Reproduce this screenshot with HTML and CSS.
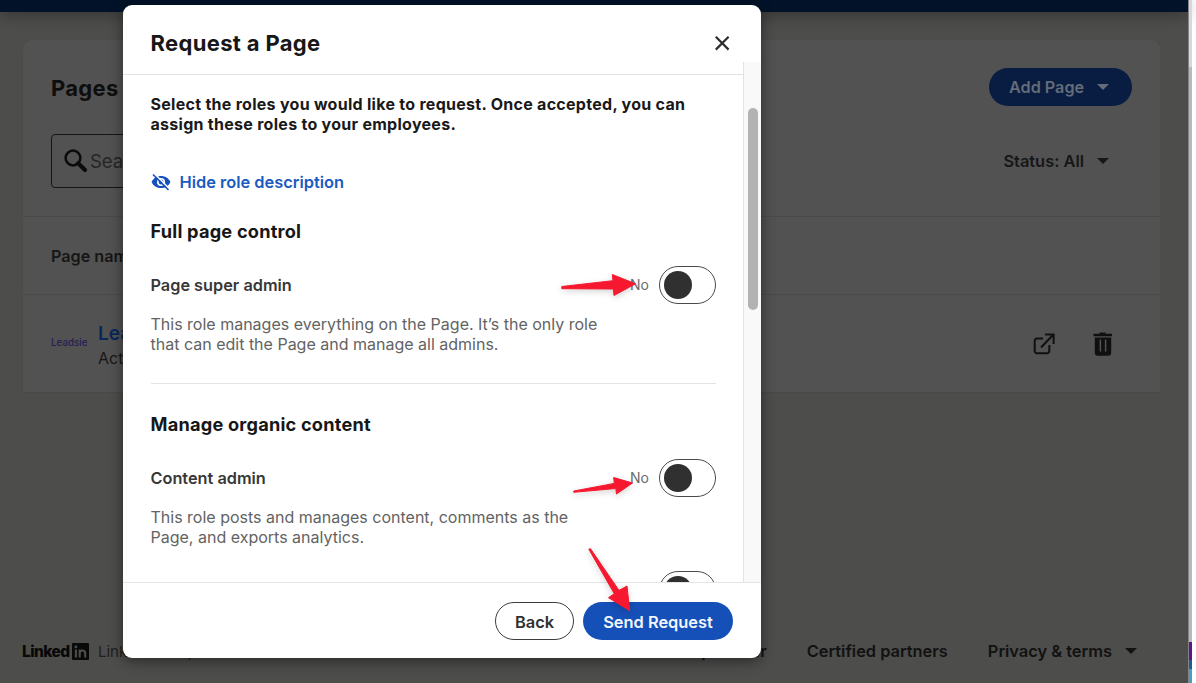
FILE: index.html
```html
<!DOCTYPE html>
<html lang="en">
<head>
<meta charset="utf-8">
<title>Request a Page</title>
<link rel="stylesheet" href="styles.css">
</head>
<body>
<div class="screen">
  <div class="app">
    <header class="topbar"></header>
    <main class="panel">
      <div class="panel-head">
        <h1 class="panel-title">Pages</h1>
        <button class="add">Add Page <i class="caret"></i></button>
      </div>
      <div class="filters">
        <div class="search">
          <svg width="24" height="24" viewBox="0 0 24 24" fill="none" stroke="#0b0b0b"><circle cx="9" cy="9" r="7.4" stroke-width="2.5"/><path d="M14.2 14.2 21 21" stroke-width="4.2" stroke-linecap="round"/></svg>
          <span>Search</span>
        </div>
        <div class="status">Status: All <i class="caret"></i></div>
      </div>
      <div class="thead">Page name</div>
      <div class="trow">
        <span class="brand">Leadsie</span>
        <div class="page"><b>Leadsie</b><span>Active</span></div>
        <div class="actions">
          <svg width="24" height="24" viewBox="0 0 24 24" fill="none" stroke="#101010" stroke-width="2"><path d="M11 6.500H5a2.300 2.300 0 0 0-2.300 2.300V19a2.300 2.300 0 0 0 2.300 2.300h10a2.300 2.300 0 0 0 2.300-2.300v-6M13 2.500h8.600v9.500M21 3 9 15.500"/></svg>
          <svg width="24" height="24" viewBox="0 0 24 24"><path fill="#101010" d="M8.500 .5h6v1.200H21V4.200H2.500V1.700h6zM3.800 5.500h16.400v15.300a3 3 0 0 1-3 3H6.800a3 3 0 0 1-3-3z"/><path d="M9.400 7.500v12M14.600 7.500v12" stroke="#525252" stroke-width="1.500"/></svg>
        </div>
      </div>
    </main>
    <footer class="foot">
      <span class="wordmark">Linked</span>
      <svg class="in" width="17" height="17" viewBox="0 0 17 17"><rect width="17" height="17" rx="1" fill="#090909"/><circle cx="3.900" cy="3.900" r="1.400" fill="#4d4d4b"/><path d="M3.900 6.500v8M7.700 14.500v-8M7.700 10.500c0-4 5.500-4 5.500 0v4" fill="none" stroke="#4d4d4b" stroke-width="2.100"/></svg>
      <span class="corp">LinkedIn Corp © 2024</span>
      <nav class="links"><span>Help center</span><span>Certified partners</span><span>Privacy &amp; terms <i class="caret"></i></span></nav>
    </footer>
  </div>
  <aside class="edge"><i class="edge-top"></i><i class="edge-mid"></i><i class="purple"></i><i class="blue"></i><i class="sky"></i></aside>
</div>

<section class="modal">
  <header class="modal-head">
    <h2>Request a Page</h2>
    <svg width="16" height="16" viewBox="0 0 16 16"><path d="M1.800 1.800l12.800 12.800M14.600 1.800l-12.800 12.800" stroke="#2e2e2e" stroke-width="2.200"/></svg>
  </header>
  <div class="modal-body">
    <div class="content">
      <p class="intro">Select the roles you would like to request. Once accepted, you can<br>assign these roles to your employees.</p>
      <div class="hide">
        <svg width="20" height="18" viewBox="0 0 20 18"><path d="M.6 9C2.400 5 6 3 10 3s7.600 2 9.400 6c-1.800 4-5.400 6-9.400 6S2.400 13 .6 9z" fill="#1650bb"/><circle cx="10" cy="9" r="4" fill="#fff"/><circle cx="10" cy="9" r="2.400" fill="#1650bb"/><path d="M3.500 .7 19 16.200" stroke="#fff" stroke-width="1.600"/><path d="M2 1.500 17.500 17" stroke="#1650bb" stroke-width="1.600"/></svg>
        <span>Hide role description</span>
      </div>
      <h3 class="group">Full page control</h3>
      <div class="role"><span>Page super admin</span><em>No</em><i class="toggle"></i></div>
      <p class="desc">This role manages everything on the Page. It’s the only role<br>that can edit the Page and manage all admins.</p>
      <h3 class="group group-next">Manage organic content</h3>
      <div class="role"><span>Content admin</span><em>No</em><i class="toggle"></i></div>
      <p class="desc last">This role posts and manages content, comments as the<br>Page, and exports analytics.</p>
      <div class="role third"><span></span><i class="toggle"></i></div>
    </div>
    <div class="track"><i class="thumb"></i></div>
  </div>
  <footer class="modal-foot">
    <button class="btn back">Back</button>
    <button class="btn send">Send Request</button>
  </footer>
</section>

<svg class="arrows" width="1196" height="683" viewBox="0 0 1196 683" fill="#f6182f" stroke="#f6182f" stroke-linejoin="round">
  <path d="M561.800 286.500 613 280.700 612.300 274.500 635.500 283.800 614 295.500 613.400 289 561.800 288.700z"/>
  <path d="M573.800 491 614.300 483.400 613.700 477.500 632.500 483 616.500 494 615.800 488.500 573.800 492.300z"/>
  <path d="M588.800 549.200 590.500 548.700 619 590.400 627 586 629.700 610.800 608.500 597.700 614.300 593.700z"/>
</svg>
</body>
</html>
```

FILE: styles.css
```css
* { box-sizing: border-box; }
body { margin: 0; width: 1196px; height: 683px; overflow: hidden; font-family: Inter, Roboto, sans-serif; background: #fff; position: relative; }
h1, h2, h3, p { margin: 0; }
i, em { font-style: normal; }
button { font-family: inherit; border: 0; }
svg { display: block; flex: none; }
.screen { display: flex; height: 683px; }
.app { width: 1188px; height: 683px; display: flex; flex-direction: column; background: #4d4d4b; }
.topbar { height: 12px; flex: none; background: #021228; box-shadow: 0 2px 16px rgba(0, 0, 0, .4); }
.panel { margin: 28px 28px 0 23px; height: 352px; flex: none; background: #525252; border-radius: 9px 9px 0 0; box-shadow: 0 1px 1px #4a4a4a; }
.panel-head { display: flex; justify-content: space-between; align-items: flex-start; height: 94px; padding: 28px 28px 0; }
.panel-title { font-size: 22px; line-height: 40px; font-weight: 700; color: #0e0e0e; letter-spacing: .3px; }
.add { display: flex; align-items: center; justify-content: space-between; width: 143px; height: 38px; border-radius: 19px; padding: 0 23px 0 20px; background: #081d41; color: #636c78; font-size: 16.200px; font-weight: 600; }
.caret { display: inline-block; border: 6px solid transparent; border-top: 6px solid currentColor; border-bottom: 0; }
.filters { display: flex; justify-content: space-between; height: 83px; padding: 0 51px 0 28px; border-bottom: 1px solid #4a4a4a; }
.search { display: flex; align-items: center; width: 300px; height: 54px; border: 1px solid #151515; border-radius: 4px; padding-left: 12px; gap: 2px; color: #252525; font-size: 18.500px; }
.status { display: flex; align-items: center; height: 54px; gap: 13px; font-size: 16.400px; font-weight: 600; color: #171717; }
.thead { height: 78px; line-height: 78px; padding-left: 28px; border-bottom: 1px solid #4a4a4a; font-size: 16.200px; font-weight: 600; color: #161616; }
.trow { display: flex; align-items: center; height: 97px; padding: 0 45px 0 28px; }
.brand { width: 47px; font-size: 9.800px; line-height: 12px; margin-top: -2px; color: #252052; font-weight: 500; }
.page { display: flex; flex-direction: column; padding-top: 5px; font-size: 16px; line-height: 24px; color: #171717; }
.page b { font-size: 19px; font-weight: 600; color: #092758; }
.actions { display: flex; gap: 35px; margin-left: auto; }
.foot { display: flex; align-items: center; margin: auto 0 20px 22px; height: 24px; color: #121212; font-size: 16px; }
.wordmark { width: 49px; font-size: 15.500px; letter-spacing: -.6px; font-weight: 800; color: #080808; white-space: nowrap; }
.in { margin-left: 1px; }
.corp { margin-left: 9px; font-size: 15px; color: #202020; }
.links { display: flex; margin-left: auto; margin-right: 51px; gap: 40px; font-weight: 600; font-size: 16.400px; color: #121212; }
.links span { display: flex; align-items: center; gap: 13px; white-space: nowrap; }
.edge { display: flex; flex-direction: column; width: 4px; height: 683px; border-left: 1px solid #858588; }
.edge-top { height: 51px; background: #d8d8da; flex: none; height: 51px; }
.edge-mid { height: 591px; background: #b9b9bb; }
.purple { height: 18px; background: #5e168c; }
.blue { height: 9px; background: #1e5b98; }
.sky { flex: 1; background: #479bce; }

.modal { position: absolute; left: 123px; top: 5px; width: 638px; height: 653px; display: flex; flex-direction: column; background: #fff; border-radius: 9px; box-shadow: 0 3px 14px rgba(0, 0, 0, .48); }
.modal-head { display: flex; align-items: center; justify-content: space-between; height: 57px; padding: 19px 31px 0 27.500px; flex: none; }
.modal-head h2 { font-size: 22px; line-height: 30px; font-weight: 700; letter-spacing: .34px; color: #171717; white-space: nowrap; }
.modal-body { display: flex; height: 521px; overflow: hidden; border-bottom: 1px solid #e5e5e5; }
.content { width: 620px; flex: none; padding: 12px 27.500px 0; }
.intro { margin: 0 -27.500px; padding: 19px 27.500px 0; border-top: 1px solid #e3e3e3; font-size: 16px; line-height: 20px; font-weight: 700; letter-spacing: .28px; color: #191919; white-space: nowrap; }
.hide { display: flex; align-items: center; gap: 9px; margin-top: 36px; height: 24px; color: #1c5bc1; font-size: 16.400px; font-weight: 600; }
.group { margin-top: 23px; height: 29px; line-height: 28px; font-size: 18.200px; font-weight: 700; letter-spacing: .2px; color: #171717; }
.group-next { margin-top: 0; border-top: 1px solid #e3e3e3; padding-top: 26px; height: 56px; }
.role { display: flex; align-items: center; margin-top: 20px; height: 38px; color: #373737; font-size: 16.300px; font-weight: 600; }
.role em { margin-left: auto; margin-right: 9.500px; font-size: 14px; line-height: 18px; font-weight: 400; color: #6b6b6b; }
.toggle { width: 57px; height: 38px; border: 1.500px solid #4a4a4a; border-radius: 19px; padding: 4px; }
.toggle::before { content: ""; display: block; width: 28px; height: 28px; border-radius: 50%; background: #303030; }
.desc { margin-top: 10px; height: 69px; font-size: 16px; line-height: 20px; color: #636363; white-space: nowrap; }
.last { height: 64px; }
.third { margin-top: 0; justify-content: space-between; }
.track { width: 18px; background: #f9f9f9; border-left: 1px solid #e3e3e3; padding: 46px 3px 0 4px; }
.thumb { display: block; width: 10px; height: 202px; border-radius: 5px; background: #b2b2b2; }
.modal-foot { display: flex; align-items: center; justify-content: flex-end; gap: 9px; height: 75px; padding: 1px 28px 0; }
.btn { height: 38px; border-radius: 19px; font-size: 16.400px; font-weight: 600; white-space: nowrap; padding: 2px 0 0; }
.back { width: 79px; border: 1px solid #3c3c3c; background: #fff; color: #303030; }
.send { width: 150px; background: #154fb8; color: #f1f6fd; }
.arrows { position: absolute; left: 0; top: 0; filter: drop-shadow(0 2px 3px rgba(0, 0, 0, .18)); }

.edge-top { height: 67px; }
.edge-mid { height: 575px; }
```
